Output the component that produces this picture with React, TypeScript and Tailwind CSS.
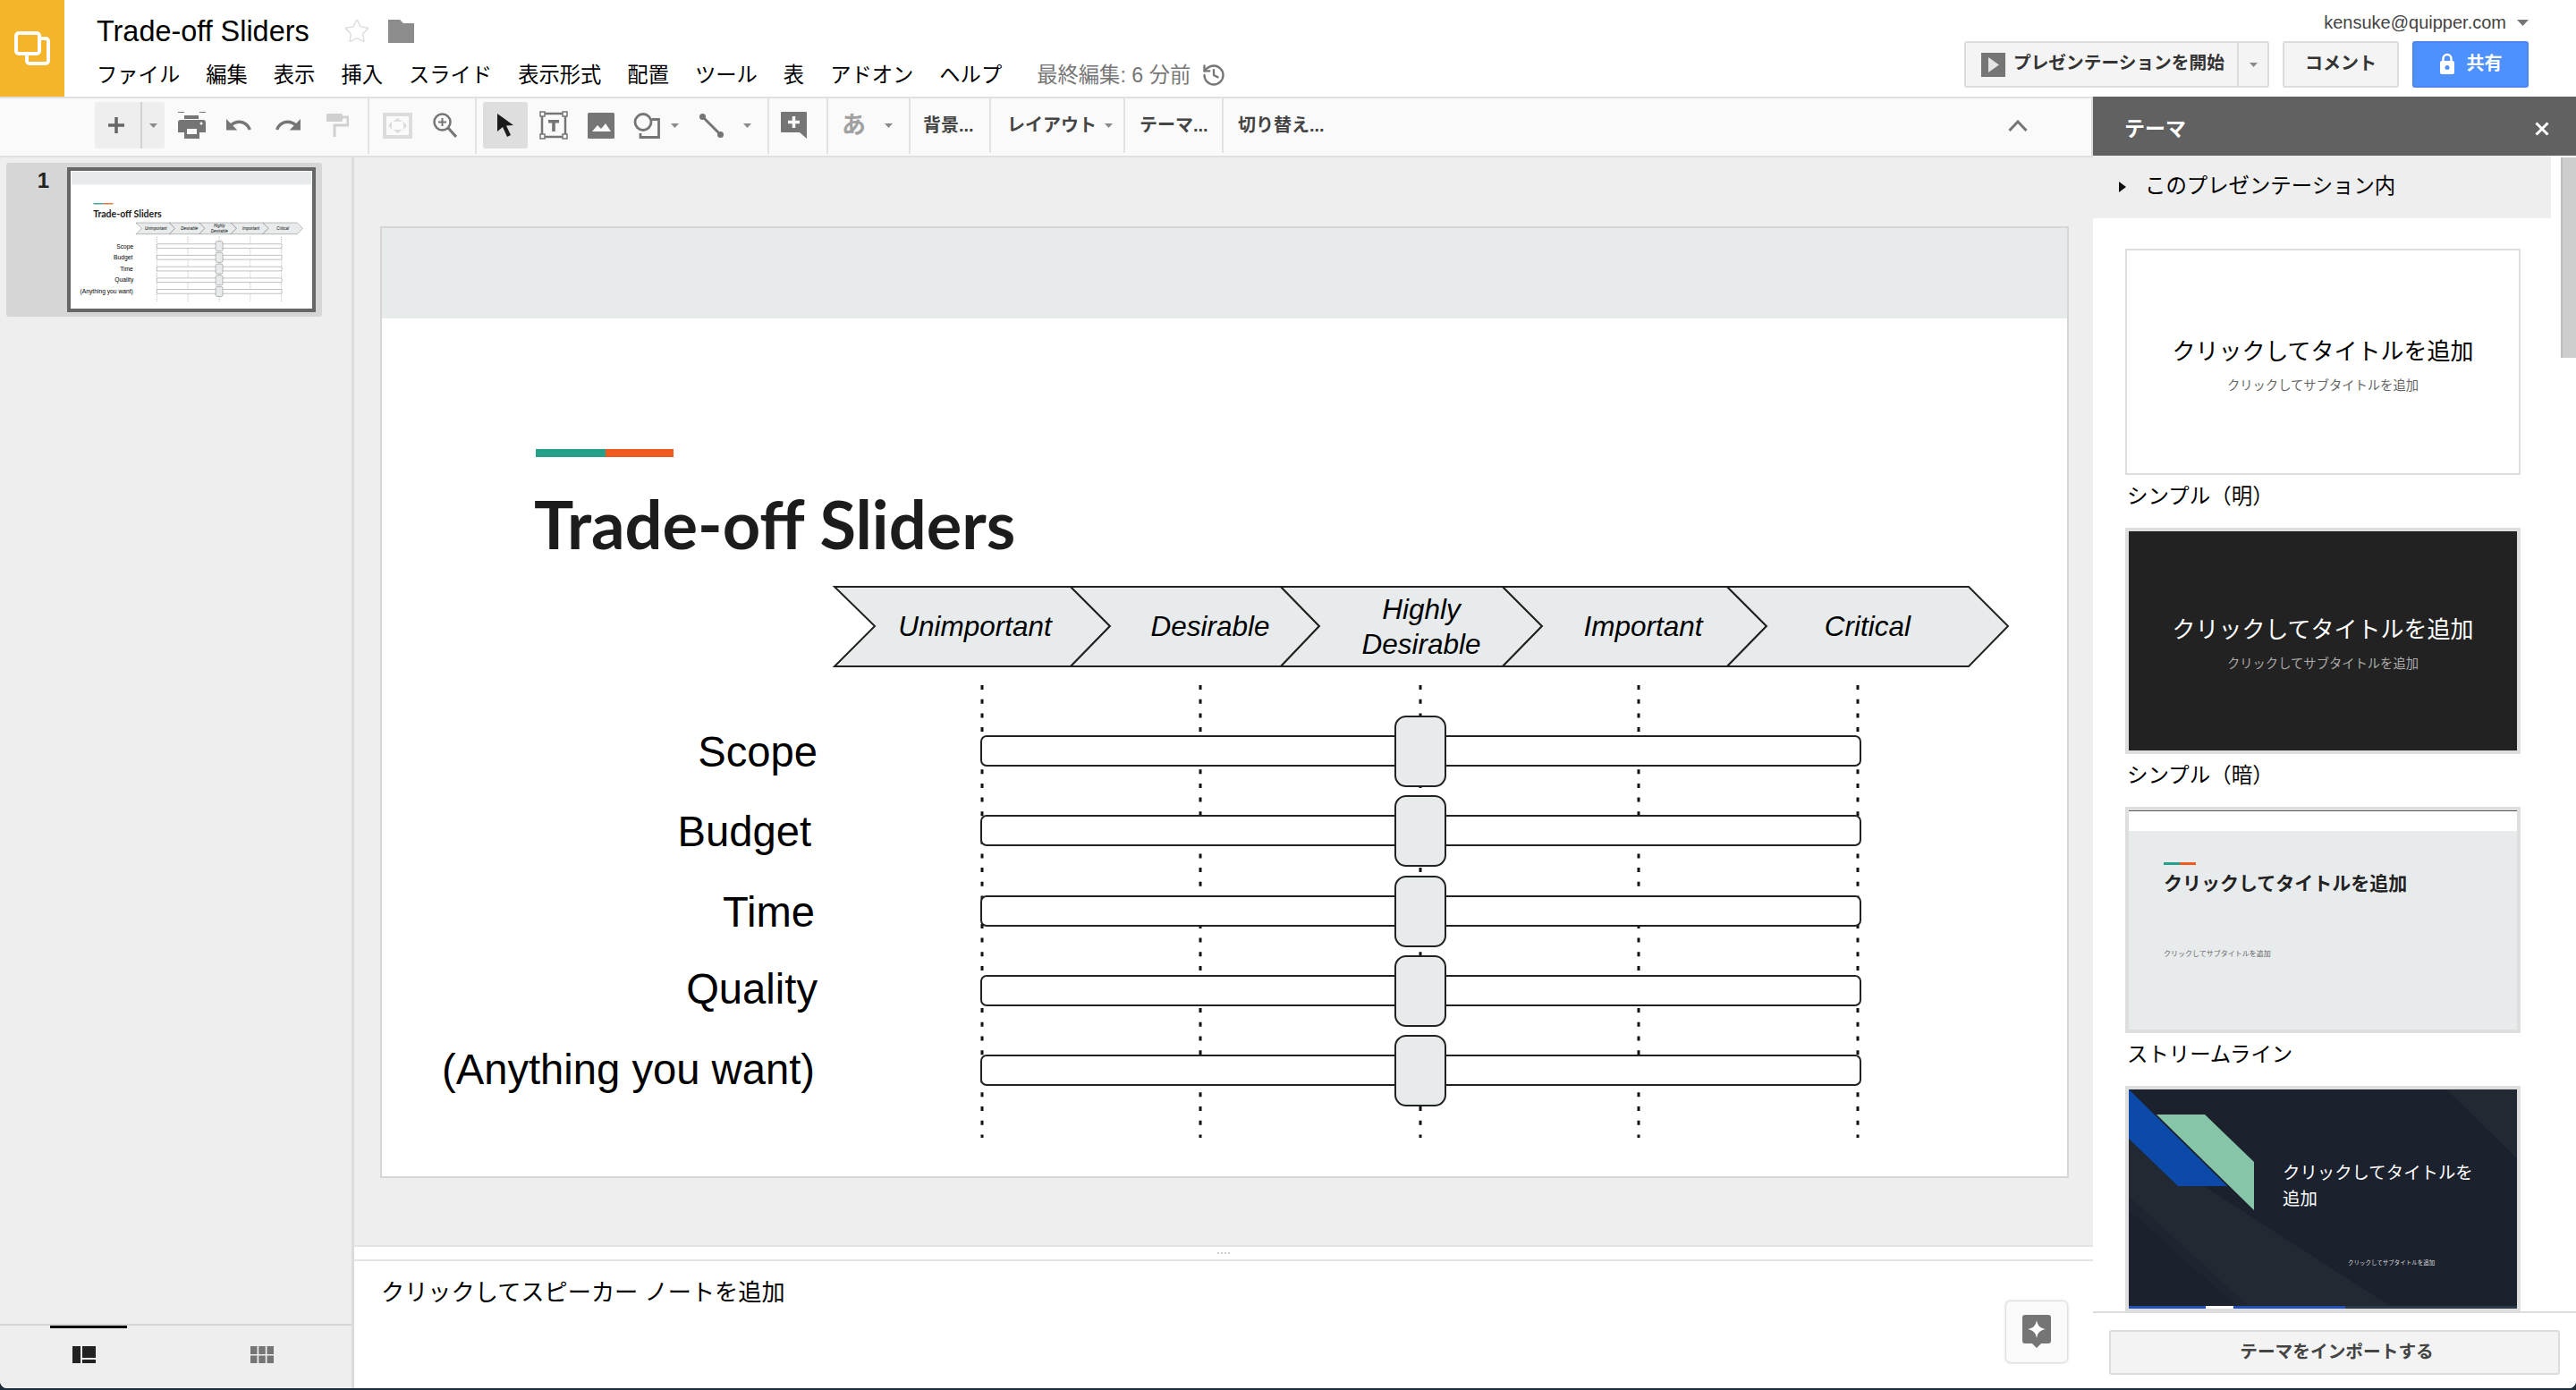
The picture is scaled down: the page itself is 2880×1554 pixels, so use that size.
import React from "react";
import { History, Star } from "lucide-react";

const JP = "font-['Liberation_Sans','Noto_Sans_CJK_JP',sans-serif]";

const menu = ["ファイル", "編集", "表示", "挿入", "スライド", "表示形式", "配置", "ツール", "表", "アドオン", "ヘルプ"];

const chevrons = [
  "933,656 1197,656 1241,700 1197,745 933,745 978,700",
  "1197,656 1432,656 1475,700 1432,745 1197,745 1241,700",
  "1432,656 1680,656 1724,700 1680,745 1432,745 1475,700",
  "1680,656 1931,656 1975,700 1931,745 1680,745 1724,700",
  "1931,656 2201,656 2245,700 2201,745 1931,745 1975,700",
];
const dashX = [1098, 1342, 1588, 1832, 2077];
const trackY = [823, 912, 1002, 1091, 1180];

function Slide() {
  return (
    <div className="absolute left-0 top-0 h-[1060px] w-[1884px] bg-white">
      <div className="h-[101px] bg-[#e8ebec]" />
      <div className="absolute left-[172px] top-[247px] flex h-[9px]">
        <div className="w-[78px] bg-[#26a08a]" />
        <div className="w-[76px] bg-[#ee5a1f]" />
      </div>
      <div className="absolute left-[170px] top-[291px] whitespace-nowrap font-['Lato',sans-serif] text-[74px] font-bold leading-[80px] text-[#1c1c1c]">
        Trade-off Sliders
      </div>
      <svg className="absolute left-0 top-0" width="1884" height="1060" viewBox="427 255 1884 1060">
        {chevrons.map((p) => (
          <polygon key={p} points={p} fill="#e8ebec" stroke="#222" strokeWidth="2" />
        ))}
        {dashX.map((x) => (
          <line key={x} x1={x} x2={x} y1="766" y2="1272" stroke="#111" strokeWidth="3" strokeDasharray="5 10.7" />
        ))}
        {trackY.map((y) => (
          <rect key={y} x="1097" y={y} width="983" height="33" rx="6" fill="#fff" stroke="#222" strokeWidth="2" />
        ))}
        {trackY.map((y) => (
          <rect key={y} x="1560" y={y - 22} width="56" height="78" rx="12" fill="#e8ebec" stroke="#222" strokeWidth="2" />
        ))}
      </svg>
      <div className="font-['Liberation_Sans',sans-serif] text-[31.500px] italic leading-[39px] text-black">
        <div className="absolute left-[543px] top-[401px] flex h-[89px] w-[240px] items-center justify-center text-center">Unimportant</div>
        <div className="absolute left-[806px] top-[401px] flex h-[89px] w-[240px] items-center justify-center text-center">Desirable</div>
        <div className="absolute left-[1042px] top-[401px] flex h-[89px] w-[240px] items-center justify-center text-center">Highly<br />Desirable</div>
        <div className="absolute left-[1290px] top-[401px] flex h-[89px] w-[240px] items-center justify-center text-center">Important</div>
        <div className="absolute left-[1541px] top-[401px] flex h-[89px] w-[240px] items-center justify-center text-center">Critical</div>
      </div>
      <div className="font-['Liberation_Sans',sans-serif] text-[47.200px] leading-[56px] text-black">
        <div className="absolute left-0 top-[558px] w-[487px] text-right">Scope</div>
        <div className="absolute left-0 top-[647px] w-[480px] text-right">Budget</div>
        <div className="absolute left-0 top-[737px] w-[484px] text-right">Time</div>
        <div className="absolute left-0 top-[823px] w-[487px] text-right">Quality</div>
        <div className="absolute left-0 top-[913px] w-[484px] text-right whitespace-nowrap">(Anything you want)</div>
      </div>
    </div>
  );
}

function Caret({ className = "" }: { className?: string }) {
  return (
    <svg width="9" height="5" viewBox="0 0 9 5" className={`shrink-0 ${className}`}>
      <path d="M0 0h9L4.500 5z" fill="#8a8a8a" />
    </svg>
  );
}

function Sep({ className = "" }: { className?: string }) {
  return <div className={`h-[62px] w-[2px] shrink-0 self-start bg-[#e2e2e2] ${className}`} />;
}

function Toolbar() {
  return (
    <div className="flex h-[68px] shrink-0 items-center border-y-2 border-[#e0e0e0] bg-[#fafafa] pb-[4px]">
      <div className="ml-[106px] flex h-[52px] w-[78px] shrink-0 items-center rounded-[3px] bg-[#eeeeee]">
        <svg width="51" height="18" viewBox="0 0 51 18" className="shrink-0">
          <path d="M24 0v18M15 9h18" stroke="#666" strokeWidth="3.500" fill="none" />
        </svg>
        <div className="h-[52px] w-[2px] bg-[#d2d2d2]" />
        <Caret className="ml-[8px]" />
      </div>
      <svg width="31" height="30" viewBox="0 0 31 30" className="ml-[15px] shrink-0">
        <path d="M0 .500h7M24 .500h7" stroke="#777" />
        <path d="M7 4h16v4H7z" fill="#757575" />
        <path d="M3 9h25a3 3 0 0 1 3 3v11h-7v7H7v-7H0V12a3 3 0 0 1 3-3z" fill="#757575" />
        <path d="M10 19h11v6H10z" fill="#fafafa" />
        <circle cx="26" cy="13" r="1.500" fill="#fafafa" />
      </svg>
      <svg width="30" height="14" viewBox="2 7 22 10" preserveAspectRatio="none" className="ml-[23px] shrink-0">
        <path fill="#757575" d="M12.500 8c-2.650 0-5.050.99-6.900 2.600L2 7v9h9l-3.620-3.620c1.390-1.160 3.160-1.880 5.120-1.880 3.540 0 6.550 2.310 7.600 5.500l2.370-.78C21.080 11.030 17.150 8 12.500 8z" />
      </svg>
      <svg width="30" height="14" viewBox="1.500 7 22 10" preserveAspectRatio="none" className="ml-[25px] shrink-0">
        <path fill="#757575" d="M18.400 10.600C16.550 8.990 14.150 8 11.500 8c-4.650 0-8.580 3.030-9.960 7.220L3.900 16c1.050-3.190 4.050-5.500 7.600-5.500 1.950 0 3.730.72 5.120 1.880L13 16h9V7l-3.600 3.600z" />
      </svg>
      <svg width="25" height="26" viewBox="0 0 25 26" className="ml-[27px] shrink-0">
        <rect x="0" y="0" width="18" height="9" rx="1.500" fill="#d0d0d0" />
        <path d="M18 4h6v9H9v13" stroke="#d0d0d0" strokeWidth="3" fill="none" />
      </svg>
      <Sep className="ml-[21px]" />
      <svg width="33" height="29" viewBox="0 0 33 29" className="ml-[15px] shrink-0">
        <rect x="2" y="2" width="29" height="25" fill="#fafafa" stroke="#dcdcdc" strokeWidth="4" />
        <path d="M16.500 6l5 4h-10zM16.500 23l5-4h-10zM6 14.500l4-4.500v9zM27 14.500l-4-4.500v9z" fill="#dcdcdc" />
      </svg>
      <svg width="27" height="28" viewBox="0 0 27 28" className="ml-[23px] shrink-0">
        <circle cx="10.500" cy="10.500" r="9" fill="none" stroke="#757575" strokeWidth="2.500" />
        <path d="M17 17l9 10" stroke="#757575" strokeWidth="3" />
        <path d="M10.500 6v9M6 10.500h9" stroke="#757575" strokeWidth="2" />
      </svg>
      <Sep className="ml-[20px]" />
      <div className="ml-[7px] flex h-[52px] w-[50px] shrink-0 items-center justify-center rounded-[3px] bg-[#dedede]">
        <svg width="18" height="26" viewBox="0 0 18 26">
          <path d="M0 0v20l6-5 5 11 4-2-5-10.500 8-.5z" fill="#1b1b1b" />
        </svg>
      </div>
      <svg width="32" height="32" viewBox="0 0 32 32" className="ml-[13px] shrink-0">
        <rect x="3" y="3" width="26" height="26" fill="none" stroke="#757575" strokeWidth="2.500" />
        <path d="M10 10h12v3.500h-4.200V23h-3.600v-9.500H10z" fill="#757575" />
        <g fill="#fafafa" stroke="#757575" strokeWidth="1.500">
          <rect x="1" y="1" width="5" height="5" />
          <rect x="26" y="1" width="5" height="5" />
          <rect x="1" y="26" width="5" height="5" />
          <rect x="26" y="26" width="5" height="5" />
        </g>
      </svg>
      <svg width="30" height="29" viewBox="0 0 30 29" className="ml-[22px] shrink-0">
        <rect width="30" height="29" rx="1.500" fill="#757575" />
        <path d="M5 21l6-7 4 4 5-6 6 9z" fill="#fafafa" />
      </svg>
      <svg width="30" height="29" viewBox="0 0 30 29" className="ml-[21px] shrink-0">
        <circle cx="11" cy="10.500" r="9" fill="none" stroke="#757575" strokeWidth="2.800" />
        <path d="M21 7.500h7.500v20H8v-4.500" fill="none" stroke="#757575" strokeWidth="2.800" />
      </svg>
      <Caret className="ml-[12px]" />
      <svg width="27" height="27" viewBox="0 0 27 27" className="ml-[23px] shrink-0">
        <path d="M3.500 3.500l20 20" stroke="#757575" strokeWidth="3" />
        <circle cx="3.500" cy="3.500" r="3.500" fill="#757575" />
        <circle cx="23.500" cy="23.500" r="3.500" fill="#757575" />
      </svg>
      <Caret className="ml-[22px]" />
      <Sep className="ml-[18px]" />
      <svg width="29" height="30" viewBox="0 0 29 30" className="ml-[13px] shrink-0">
        <path d="M1 0h27a1 1 0 0 1 1 1v29l-8-7H1a1 1 0 0 1-1-1V1a1 1 0 0 1 1-1z" fill="#757575" />
        <path d="M14.500 5v13M8 11.500h13" stroke="#fafafa" strokeWidth="3.500" />
      </svg>
      <Sep className="ml-[22px]" />
      <div className={`ml-[15px] w-[28px] shrink-0 text-[27px] font-bold leading-[30px] text-[#a0a0a0] ${JP}`}>あ</div>
      <Caret className="ml-[20px]" />
      <Sep className="ml-[18px]" />
      <div className={`flex shrink-0 items-center text-[20px] font-bold text-[#444] ${JP}`}>
        <span className="ml-[14px] w-[72px] whitespace-nowrap">背景...</span>
        <Sep className="ml-[2px]" />
        <span className="ml-[18px] w-[96px] whitespace-nowrap">レイアウト</span>
        <Caret className="ml-[13px]" />
        <Sep className="ml-[12px]" />
        <span className="ml-[16px] w-[75px] whitespace-nowrap">テーマ...</span>
        <Sep className="ml-[17px]" />
        <span className="ml-[16px] whitespace-nowrap">切り替え...</span>
      </div>
      <svg width="22" height="13" viewBox="0 0 22 13" className="ml-[764px] shrink-0">
        <path d="M1.500 12L11 2l9.500 10" fill="none" stroke="#757575" strokeWidth="3" />
      </svg>
    </div>
  );
}

function Header() {
  return (
    <div className="flex h-[108px] shrink-0 bg-white">
      <div className="flex h-[108px] w-[72px] shrink-0 items-center justify-center bg-[#f4b52a]">
        <svg width="40" height="38" viewBox="0 0 40 38">
          <rect x="14" y="8" width="24" height="28" rx="3" fill="none" stroke="#fff" strokeWidth="4" />
          <rect x="2" y="2" width="26" height="23" rx="3" fill="#f4b52a" stroke="#fff" strokeWidth="4" />
        </svg>
      </div>
      <div className="ml-[36px] flex flex-col">
        <div className="flex h-[67px] items-center pt-[3px]">
          <span className="w-[237px] whitespace-nowrap font-['Liberation_Sans',sans-serif] text-[32.400px] leading-[40px] text-black">Trade-off Sliders</span>
          <Star size={30} strokeWidth={1} color="#d8d8d8" className="ml-[39px] shrink-0" />
          <svg width="29" height="26" viewBox="0 0 29 26" className="ml-[20px] shrink-0">
            <path d="M0 0h13l4 4h12v22H0z" fill="#8c8c8c" />
          </svg>
        </div>
        <div className={`flex items-center gap-[29px] text-[23.300px] leading-[34px] text-black ${JP}`}>
          {menu.map((m) => (
            <span key={m} className="whitespace-nowrap">{m}</span>
          ))}
          <span className="ml-[10px] flex items-center whitespace-nowrap text-[#777]">
            最終編集: 6 分前
            <History size={28} strokeWidth={2} color="#777" className="ml-[12px]" />
          </span>
        </div>
      </div>
      <div className={`ml-auto flex flex-col items-end pr-[53px] ${JP}`}>
        <div className="flex h-[46px] items-center pt-[4px] font-['Liberation_Sans',sans-serif] text-[20px] text-[#444]">
          kensuke@quipper.com
          <svg width="13" height="7" viewBox="0 0 13 7" className="ml-[12px]"><path d="M0 0h13L6.500 7z" fill="#777" /></svg>
        </div>
        <div className="flex gap-[15px] text-[20px] font-bold">
          <div className="flex h-[52px] w-[341px] items-center rounded-[3px] border-2 border-[#dcdcdc] bg-[#f4f4f4] pb-[2px] text-[#333]">
            <svg width="27" height="27" viewBox="0 0 27 27" className="ml-[17px] mt-[2px] shrink-0">
              <rect width="27" height="27" fill="#757575" />
              <path d="M8 5l12 8.500L8 22z" fill="#e4e4e4" />
            </svg>
            <span className="ml-[9px] w-[240px] whitespace-nowrap text-[19.700px]">プレゼンテーションを開始</span>
            <div className="ml-[10px] -mb-[2px] flex h-[48px] flex-1 items-center justify-center border-l-2 border-[#dcdcdc]">
              <Caret />
            </div>
          </div>
          <div className="flex h-[52px] w-[130px] items-center justify-center rounded-[3px] border-2 border-[#dcdcdc] bg-[#f4f4f4] pb-[2px] text-[#333]">コメント</div>
          <div className="flex h-[52px] w-[130px] items-center justify-center rounded-[3px] border-2 border-[#4a87ee] bg-[#4d90fe] pb-[2px] text-white">
            <svg width="18" height="24" viewBox="0 0 18 24" className="mr-[13px]">
              <path d="M4.500 10V6.500a4.500 4.500 0 0 1 9 0V10" fill="none" stroke="#fff" strokeWidth="2.500" />
              <rect x="1" y="9" width="16" height="15" rx="2" fill="#fff" />
              <circle cx="9" cy="16.500" r="2.500" fill="#4d90fe" />
            </svg>
            共有
          </div>
        </div>
      </div>
    </div>
  );
}

function Filmstrip() {
  return (
    <div className="flex w-[396px] shrink-0 flex-col border-r-[3px] border-[#dcdcdc] bg-[#eeeeee]">
      <div className="flex-1 pl-[7px] pt-[6px]">
        <div className="flex h-[172px] w-[353px] rounded-[3px] bg-[#d6d6d6]">
          <div className="w-[68px] pr-[20px] pt-[6px] text-right font-['Liberation_Sans',sans-serif] text-[24px] font-bold leading-[28px] text-[#222]">1</div>
          <div className="mt-[5px] h-[162px] w-[278px] border-[4px] border-[#666] bg-white p-[1px]">
            <div className="relative h-[150px] w-[268px] overflow-hidden">
              <div className="absolute left-0 top-0 origin-top-left scale-[0.1422]">
                <Slide />
              </div>
            </div>
          </div>
        </div>
      </div>
      <div className="relative flex h-[72px] gap-[173px] border-t-2 border-[#d6d6d6] pl-[81px] pt-[23px]">
        <div className="absolute left-[56px] top-0 h-[3px] w-[86px] bg-black" />
        <svg width="26" height="19" viewBox="0 0 26 19" className="shrink-0">
          <path d="M0 0h9v19H0zM11 0h15v13H11zM11 15h15v4H11z" fill="#222" />
        </svg>
        <svg width="26" height="19" viewBox="0 0 26 19" className="shrink-0">
          <path d="M0 0h7.500v9H0zM9.250 0h7.500v9h-7.500zM18.500 0H26v9h-7.500zM0 10.500h7.500V19H0zM9.250 10.500h7.500V19h-7.500zM18.500 10.500H26V19h-7.500z" fill="#757575" />
        </svg>
      </div>
    </div>
  );
}

function Center() {
  return (
    <div className="relative flex min-w-0 flex-1 flex-col">
      <div className="h-[1216px] shrink-0 bg-[#eeeeee] pl-[31px] pt-[79px]">
        <div className="relative h-[1060px] w-[1884px] shadow-[0_0_0_2px_#d6d6d6]">
          <Slide />
        </div>
      </div>
      <div className="flex h-[18px] shrink-0 items-center justify-center border-y-2 border-[#e4e4e4] bg-white">
        <div className="flex gap-[2px]">
          <div className="h-[2px] w-[2px] bg-[#ccc]" />
          <div className="h-[2px] w-[2px] bg-[#ccc]" />
          <div className="h-[2px] w-[2px] bg-[#ccc]" />
          <div className="h-[2px] w-[2px] bg-[#ccc]" />
        </div>
      </div>
      <div className={`flex-1 bg-white pl-[30px] pt-[16px] text-[26.200px] leading-[38px] text-black ${JP}`}>
        クリックしてスピーカー ノートを追加
      </div>
      <div className="absolute left-[1847px] top-[1279px] flex h-[68px] w-[68px] items-center justify-center rounded-[5px] bg-[#fafafa] shadow-[0_0_3px_1px_#cfcfcf]">
        <svg width="32" height="38" viewBox="0 0 32 38">
          <path d="M3 0h26a3 3 0 0 1 3 3v26a3 3 0 0 1-3 3h-8l-5 5-5-5H3a3 3 0 0 1-3-3V3a3 3 0 0 1 3-3z" fill="#757575" />
          <path d="M16 6c1 6 4 9 10 10-6 1-9 4-10 10-1-6-4-9-10-10 6-1 9-4 10-10z" fill="#fff" />
        </svg>
      </div>
    </div>
  );
}

function ThemePanel() {
  return (
    <div className={`-ml-[2px] flex h-full w-[542px] shrink-0 flex-col border-l-2 border-[#dcdcdc] ${JP}`}>
      <div className="flex h-[66px] shrink-0 items-center justify-between bg-[#616161] pl-[35px] pr-[30px] pt-[6px] text-[23px] font-bold text-white">
        テーマ
        <svg width="16" height="16" viewBox="0 0 16 16"><path d="M1.500 1.500l13 13M14.500 1.500l-13 13" stroke="#fff" strokeWidth="3" /></svg>
      </div>
      <div className="relative min-h-0 flex-1 overflow-hidden bg-white">
        <div className="absolute right-0 top-[2px] h-[224px] w-[17px] border-l-2 border-[#bdbdbd] bg-[#cdcdcd]" />
        <div className="flex h-[70px] w-[512px] items-center bg-[#eeeeee] pl-[29px] text-[23.400px] text-black">
          <svg width="8" height="12" viewBox="0 0 8 12" className="mr-[21px]"><path d="M0 0l8 6-8 6z" fill="#111" /></svg>
          このプレゼンテーション内
        </div>
        <div className="pl-[36px] pt-[34px]">
          <div className="flex h-[253px] w-[442px] flex-col items-center justify-center border-2 border-[#dedede] bg-white pt-[8px]">
            <div className="text-[26px] leading-[34px] text-black">クリックしてタイトルを追加</div>
            <div className="mt-[11px] text-[14.300px] leading-[20px] text-[#666]">クリックしてサブタイトルを追加</div>
          </div>
          <div className="flex h-[59px] items-start pl-[2px] pt-[8px] text-[23.500px] leading-[32px] text-black">シンプル（明）</div>
          <div className="h-[253px] w-[442px] border-[4px] border-[#dedede]">
            <div className="flex h-full flex-col items-center justify-center bg-[#222222] pt-[6px]">
              <div className="text-[26px] leading-[34px] text-white">クリックしてタイトルを追加</div>
              <div className="mt-[11px] text-[14.300px] leading-[20px] text-[#aaa]">クリックしてサブタイトルを追加</div>
            </div>
          </div>
          <div className="flex h-[59px] items-start pl-[2px] pt-[8px] text-[23.500px] leading-[32px] text-black">シンプル（暗）</div>
          <div className="flex h-[253px] w-[442px] flex-col border-[4px] border-[#dedede] bg-white">
            <div className="h-[1px] shrink-0 bg-[#555]" />
            <div className="mt-[22px] flex-1 bg-[#e8ebec] pl-[39px] pt-[35px]">
              <div className="flex h-[3px] w-[36px]">
                <div className="w-[18px] bg-[#26a08a]" />
                <div className="w-[18px] bg-[#ee5a1f]" />
              </div>
              <div className="mt-[6px] text-[21px] font-bold leading-[30px] text-[#222]">クリックしてタイトルを追加</div>
              <div className="mt-[58px] text-[8px] leading-[12px] text-[#666]">クリックしてサブタイトルを追加</div>
            </div>
          </div>
          <div className="flex h-[59px] items-start pl-[2px] pt-[8px] text-[23.400px] leading-[32px] text-black">ストリームライン</div>
          <div className="relative h-[253px] w-[442px] overflow-hidden border-[4px] border-[#dedede] bg-[#1b212d]">
            <svg className="absolute left-0 top-0" width="434" height="249" viewBox="0 0 434 249">
              <path d="M355 0l79 77V0z" fill="#232933" />
              <path d="M0 55l55 53h29l208 134H133L0 120z" fill="#232933" />
              <path d="M0 120l133 122H120L0 135z" fill="#1f2530" />
              <path d="M0 0l110 108H55L0 55z" fill="#0b4aa8" />
              <path d="M31 28h54l55 53v54z" fill="#86c5a7" />
              <rect x="0" y="242" width="242" height="3" fill="#2350b8" />
              <rect x="86" y="242" width="31" height="3" fill="#fff" />
              <rect x="242" y="242" width="192" height="3" fill="#2b3848" />
            </svg>
            <div className="absolute left-[172px] top-[79px] w-[216px] text-[19.400px] leading-[29px] text-white">クリックしてタイトルを追加</div>
            <div className="absolute left-[245px] top-[188px] whitespace-nowrap text-[6.500px] leading-[12px] text-[#ddd]">クリックしてサブタイトルを追加</div>
          </div>
        </div>
      </div>
      <div className="flex h-[86px] shrink-0 justify-center border-t-2 border-[#dcdcdc] bg-white pt-[19px]">
        <div className="flex h-[50px] w-[504px] items-center justify-center rounded-[3px] border-2 border-[#dcdcdc] bg-[#f3f3f3] pl-[5px] text-[19.700px] font-bold text-[#444]">
          テーマをインポートする
        </div>
      </div>
    </div>
  );
}

export default function App() {
  return (
    <div className="h-[1554px] w-[2880px] overflow-hidden bg-[#1d2d3b]">
      <div className="flex h-[1552px] flex-col overflow-hidden rounded-b-[8px] bg-white">
        <Header />
        <div className="flex min-h-0 flex-1">
          <div className="flex w-[2340px] shrink-0 flex-col">
            <Toolbar />
            <div className="flex min-h-0 flex-1">
              <Filmstrip />
              <Center />
            </div>
          </div>
          <ThemePanel />
        </div>
      </div>
    </div>
  );
}
